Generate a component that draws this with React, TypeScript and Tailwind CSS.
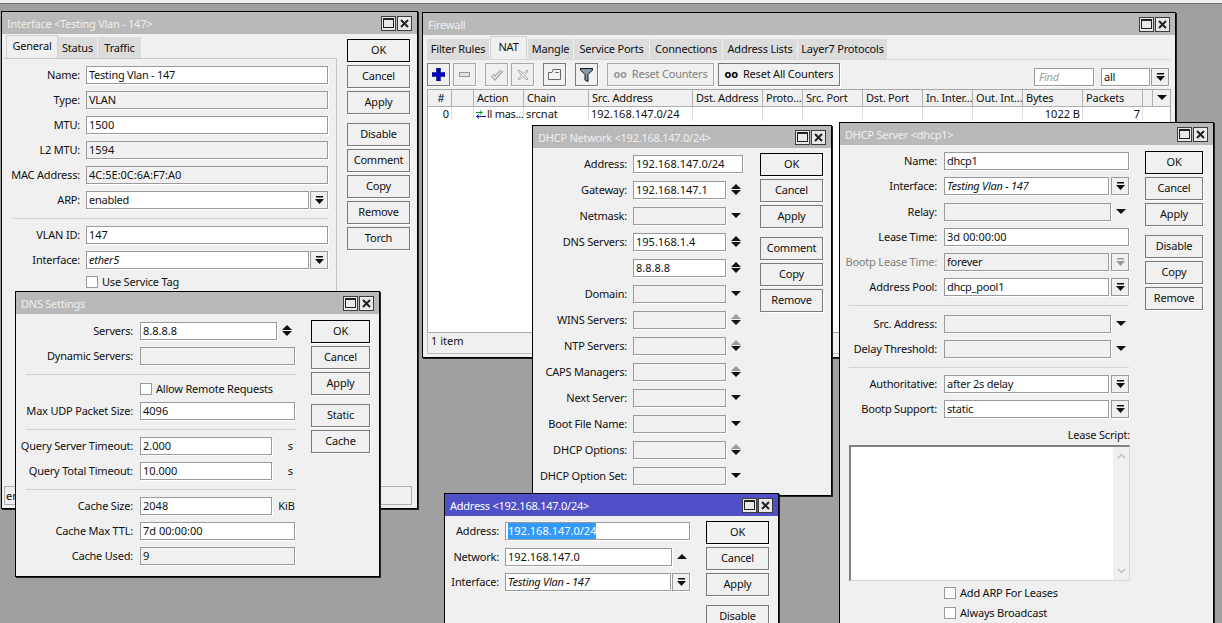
import type { ReactNode } from "react";
import { clsx } from "clsx";

const label = "text-right text-[11px] leading-[18px] tracking-[-0.2px] text-[#111] whitespace-nowrap";

function WinBtn({ close }: { close?: boolean }) {
  return (
    <div className="flex h-[15px] w-[15px] items-center justify-center border border-[#3c3c3c] bg-[#e8e8e8]">
      {close ? (
        <svg width="9" height="9" viewBox="0 0 9 9">
          <path d="M1 1L8 8M8 1L1 8" stroke="#222" strokeWidth="2" />
        </svg>
      ) : (
        <div className="h-[10px] w-[11px] border border-[#222] border-t-2" />
      )}
    </div>
  );
}

function Window({
  title,
  active,
  className,
  children,
}: {
  title: string;
  active?: boolean;
  className: string;
  children: ReactNode;
}) {
  return (
    <div className={clsx("absolute flex flex-col overflow-hidden border border-black bg-[#f0f0f0] shadow-[1px_1px_0_#222]", className)}>
      <div className={clsx("flex h-[22px] shrink-0 items-center justify-between pl-[5px] pr-[5px]", active ? "bg-[#4f50c8] text-white" : "bg-[#b9b9b9] text-[#efefef]")}>
        <span className="pt-[2px] text-[11px] tracking-[-0.25px] whitespace-nowrap">{title}</span>
        <div className="flex gap-[1px]">
          <WinBtn />
          <WinBtn close />
        </div>
      </div>
      {children}
    </div>
  );
}

function Btn({ children, primary, className }: { children: ReactNode; primary?: boolean; className?: string }) {
  return (
    <div
      className={clsx(
        "flex h-[23px] shrink-0 items-center justify-center bg-[#f0f0f0] text-[11px] tracking-[-0.2px] text-[#111] shadow-[1px_1px_0_#fff]",
        primary ? "border border-black" : "border border-[#7a7a7a]",
        className,
      )}
    >
      {children}
    </div>
  );
}

function Buttons({ groups, width }: { groups: string[][]; width: string }) {
  return (
    <div className={clsx("flex shrink-0 flex-col gap-[9px]", width)}>
      {groups.map((g, i) => (
        <div key={i} className="flex flex-col gap-[3px]">
          {g.map((b) => (
            <Btn key={b} primary={b === "OK"}>
              {b}
            </Btn>
          ))}
        </div>
      ))}
    </div>
  );
}

function Field({
  value,
  disabled,
  italic,
  className,
  selected,
}: {
  value?: string;
  disabled?: boolean;
  italic?: boolean;
  className?: string;
  selected?: boolean;
}) {
  const wordy = /[a-z]{3}/i.test(value ?? "");
  return (
    <div
      className={clsx(
        "flex h-[18px] items-center overflow-hidden border border-[#9a9a9a] pl-[2px] text-[11px] whitespace-nowrap text-[#111] shadow-[1px_1px_0_#fff]",
        disabled ? "bg-[#f0f0f0]" : "bg-white",
        italic && "italic",
        wordy && "tracking-[-0.25px]",
        className,
      )}
    >
      {selected ? <span className="bg-[#3399ff] text-white">{value}</span> : value}
    </div>
  );
}

function DropBtn({ faded }: { faded?: boolean }) {
  const c = faded ? "#9a9a9a" : "#111";
  return (
    <div className="flex h-[18px] w-[18px] shrink-0 items-center justify-center border border-[#9a9a9a] bg-[#f0f0f0] shadow-[1px_1px_0_#fff]">
      <svg width="9" height="9" viewBox="0 0 9 9">
        <path d="M1 0H8V1.5H1Z M0 3H9L4.5 8Z" fill={c} />
      </svg>
    </div>
  );
}

function Arrow({ kind }: { kind: "down" | "up" | "both" | "bothFaded" }) {
  if (kind === "down") {
    return (
      <svg width="10" height="5" viewBox="0 0 10 5" className="mb-[1px] shrink-0">
        <path d="M0 0H10L5 5Z" fill="#111" />
      </svg>
    );
  }
  if (kind === "up") {
    return (
      <svg width="10" height="5" viewBox="0 0 10 5" className="mb-[1px] shrink-0">
        <path d="M0 5H10L5 0Z" fill="#111" />
      </svg>
    );
  }
  return (
    <svg width="10" height="11" viewBox="0 0 10 11" className="mb-[1px] shrink-0">
      <path d="M0 5H10L5 0Z" fill={kind === "bothFaded" ? "#9a9a9a" : "#111"} />
      <path d="M0 6H10L5 11Z" fill="#111" />
    </svg>
  );
}

function Row({
  name,
  labelWidth,
  gap,
  rowClass,
  muted,
  children,
}: {
  name?: string;
  labelWidth: string;
  gap: string;
  rowClass: string;
  muted?: boolean;
  children?: ReactNode;
}) {
  return (
    <div className={clsx("flex items-start", gap, rowClass)}>
      <div className={clsx(label, labelWidth, muted && "!text-[#808080]")}>{name}</div>
      {children}
    </div>
  );
}

function Check({ text, className }: { text: string; className?: string }) {
  return (
    <div className={clsx("flex items-center gap-[4px] text-[11px] leading-[14px] tracking-[-0.2px] whitespace-nowrap text-[#111]", className)}>
      <div className="h-[12px] w-[12px] border border-[#9a9a9a] bg-white" />
      {text}
    </div>
  );
}

function Sep({ className }: { className?: string }) {
  return <div className={clsx("h-px bg-[#d4d4d4]", className)} />;
}

function InterfaceWindow() {
  const lw = "w-[76px]";
  const gap = "gap-[6px]";
  const rows: [string, string, boolean][] = [
    ["Name:", "Testing Vlan - 147", false],
    ["Type:", "VLAN", true],
    ["MTU:", "1500", false],
    ["L2 MTU:", "1594", true],
    ["MAC Address:", "4C:5E:0C:6A:F7:A0", true],
  ];
  return (
    <Window title="Interface <Testing Vlan - 147>" className="left-[1px] top-[11px] h-[498px] w-[417px]">
      <div className="flex min-h-0 flex-1 flex-col pl-[2px] pr-[5px] pb-[3px]">
        <div className="flex flex-1">
          <div className="w-[333px] shrink-0">
            <div className="flex h-[24px] items-end pl-[2px] text-[11px] tracking-[-0.2px] text-[#111]">
              <div className="flex h-[23px] w-[52px] items-center justify-center border border-b-0 border-[#d0d0d0] bg-[#f0f0f0] pb-[2px]">General</div>
              <div className="flex h-[21px] w-[40px] items-center justify-center border-r border-[#f0f0f0] bg-[#dcdcdc] pt-[1px]">Status</div>
              <div className="flex h-[21px] w-[43px] items-center justify-center bg-[#dcdcdc] pt-[1px]">Traffic</div>
            </div>
            <div className="h-[425px] border-t border-r border-[#c8c8c8] pt-[7px]">
              {rows.map(([n, v, d]) => (
                <Row key={n} name={n} labelWidth={lw} gap={gap} rowClass="h-[25px]">
                  <Field value={v} disabled={d} className="w-[242px]" />
                </Row>
              ))}
              <Row name="ARP:" labelWidth={lw} gap={gap} rowClass="h-[25px]">
                <div className="flex w-[242px] gap-px">
                  <Field value="enabled" className="flex-1" />
                  <DropBtn />
                </div>
              </Row>
              <Sep className="mt-[2px] ml-[9px] w-[315px]" />
              <Row name="VLAN ID:" labelWidth={lw} gap={gap} rowClass="mt-[7px] h-[25px]">
                <Field value="147" className="w-[242px]" />
              </Row>
              <Row name="Interface:" labelWidth={lw} gap={gap} rowClass="h-[24px]">
                <div className="flex w-[242px] gap-px">
                  <Field value="ether5" italic className="flex-1" />
                  <DropBtn />
                </div>
              </Row>
              <Check text="Use Service Tag" className="ml-[82px]" />
            </div>
          </div>
          <div className="ml-[10px] pt-[5px]">
            <Buttons groups={[["OK", "Cancel", "Apply"], ["Disable", "Comment", "Copy", "Remove", "Torch"]]} width="w-[63px]" />
          </div>
        </div>
        <div className="h-[19px] shrink-0 border border-[#b0b0b0] pl-[1px] text-[11px] leading-[17px] text-[#111]">enabled</div>
      </div>
    </Window>
  );
}

function DnsWindow() {
  const lw = "w-[116px]";
  const gap = "gap-[7px]";
  const unit = "flex h-[18px] items-center text-[11px] text-[#111]";
  return (
    <Window title="DNS Settings" className="left-[15px] top-[291px] h-[286px] w-[365px]">
      <div className="flex flex-1 pl-[1px] pt-[8px]">
        <div className="w-[280px] shrink-0">
          <Row name="Servers:" labelWidth={lw} gap={gap} rowClass="h-[25px]">
            <div className="flex items-center gap-[5px]">
              <Field value="8.8.8.8" className="w-[137px]" />
              <Arrow kind="both" />
            </div>
          </Row>
          <Row name="Dynamic Servers:" labelWidth={lw} gap={gap} rowClass="h-[25px]">
            <Field disabled className="w-[155px]" />
          </Row>
          <Sep className="mt-[2px] ml-[9px] w-[270px]" />
          <Check text="Allow Remote Requests" className="mt-[7px] ml-[123px] h-[14px]" />
          <Row name="Max UDP Packet Size:" labelWidth={lw} gap={gap} rowClass="mt-[6px] h-[25px]">
            <Field value="4096" className="w-[155px]" />
          </Row>
          <Sep className="mt-[2px] ml-[9px] w-[270px]" />
          <Row name="Query Server Timeout:" labelWidth={lw} gap={gap} rowClass="mt-[7px] h-[25px]">
            <div className="flex w-[155px] justify-between">
              <Field value="2.000" className="w-[132px]" />
              <span className={clsx(unit, "pr-[2px]")}>s</span>
            </div>
          </Row>
          <Row name="Query Total Timeout:" labelWidth={lw} gap={gap} rowClass="h-[25px]">
            <div className="flex w-[155px] justify-between">
              <Field value="10.000" className="w-[132px]" />
              <span className={clsx(unit, "pr-[2px]")}>s</span>
            </div>
          </Row>
          <Sep className="mt-[2px] ml-[9px] w-[270px]" />
          <Row name="Cache Size:" labelWidth={lw} gap={gap} rowClass="mt-[7px] h-[25px]">
            <div className="flex w-[155px] justify-between">
              <Field value="2048" className="w-[132px]" />
              <span className={unit}>KiB</span>
            </div>
          </Row>
          <Row name="Cache Max TTL:" labelWidth={lw} gap={gap} rowClass="h-[25px]">
            <Field value="7d 00:00:00" className="w-[155px]" />
          </Row>
          <Row name="Cache Used:" labelWidth={lw} gap={gap} rowClass="h-[25px]">
            <Field value="9" disabled className="w-[155px]" />
          </Row>
        </div>
        <div className="-mt-[2px] ml-[14px]">
          <Buttons groups={[["OK", "Cancel", "Apply"], ["Static", "Cache"]]} width="w-[59px]" />
        </div>
      </div>
    </Window>
  );
}

function ToolBtn({ children, className, faded }: { children: ReactNode; className: string; faded?: boolean }) {
  return (
    <div className={clsx("flex h-[23px] shrink-0 items-center justify-center border text-[11px] tracking-[-0.2px] shadow-[1px_1px_0_#fff]", faded ? "border-[#aaa] text-[#808080]" : "border-[#7a7a7a] text-[#111]", className)}>
      {children}
    </div>
  );
}

const columns: [string, string][] = [
  ["#", "w-[24px] justify-center"],
  ["", "w-[22px]"],
  ["Action", "w-[50px]"],
  ["Chain", "w-[65px]"],
  ["Src. Address", "w-[104px]"],
  ["Dst. Address", "w-[70px]"],
  ["Proto...", "w-[40px]"],
  ["Src. Port", "w-[60px]"],
  ["Dst. Port", "w-[60px]"],
  ["In. Inter...", "w-[50px]"],
  ["Out. Int...", "w-[50px]"],
  ["Bytes", "w-[60px]"],
  ["Packets", "w-[60px]"],
  ["", "w-[10px]"],
];

const tabs: [string, string][] = [
  ["Filter Rules", "w-[62px]"],
  ["NAT", "w-[37px]"],
  ["Mangle", "w-[45px]"],
  ["Service Ports", "w-[75px]"],
  ["Connections", "w-[72px]"],
  ["Address Lists", "w-[74px]"],
  ["Layer7 Protocols", "w-[89px]"],
];

function FirewallWindow() {
  const cell = "flex h-[14px] items-center overflow-hidden border-r border-[#e0e0e0] bg-white px-[2px] text-[11px] whitespace-nowrap text-[#111]";
  return (
    <Window title="Firewall" className="left-[422px] top-[12px] h-[346px] w-[754px]">
      <div className="flex min-h-0 flex-1 flex-col px-[4px]">
        <div className="mt-[1px] flex h-[24px] shrink-0 items-end gap-px border-b border-[#d8d8d8] text-[11px] tracking-[-0.2px] whitespace-nowrap text-[#111]">
          {tabs.map(([t, w]) =>
            t === "NAT" ? (
              <div key={t} className={clsx("flex h-[23px] shrink-0 items-center justify-center border border-b-0 border-[#d0d0d0] bg-[#f0f0f0] pb-[2px]", w)}>
                {t}
              </div>
            ) : (
              <div key={t} className={clsx("flex h-[20px] shrink-0 items-center justify-center bg-[#dcdcdc] pt-[1px]", w)}>
                {t}
              </div>
            ),
          )}
        </div>
        <div className="mt-[3px] flex h-[23px] shrink-0 items-center">
          <ToolBtn className="w-[23px]">
            <svg width="13" height="13" viewBox="0 0 13 13">
              <path d="M4.5 0H8.5V4.5H13V8.5H8.5V13H4.5V8.5H0V4.5H4.5Z" fill="#0000c8" stroke="#000050" strokeWidth="0.5" />
            </svg>
          </ToolBtn>
          <ToolBtn faded className="ml-[3px] w-[23px]">
            <div className="h-[5px] w-[11px] border border-[#999] bg-[#e4e4e4]" />
          </ToolBtn>
          <ToolBtn faded className="ml-[9px] w-[23px]">
            <svg width="14" height="12" viewBox="0 0 14 12">
              <path d="M1 7L5 11L13 2M3 5L5 7L11 1" fill="none" stroke="#a8a8a8" strokeWidth="1.3" />
            </svg>
          </ToolBtn>
          <ToolBtn faded className="ml-[3px] w-[23px]">
            <svg width="12" height="12" viewBox="0 0 12 12">
              <path d="M2 1L6 4.5L10 1L11 2L7.5 6L11 10L10 11L6 7.5L2 11L1 10L4.5 6L1 2Z" fill="#f0f0f0" stroke="#a8a8a8" />
            </svg>
          </ToolBtn>
          <ToolBtn className="ml-[9px] w-[23px]">
            <svg width="13" height="11" viewBox="0 0 13 11">
              <path d="M0.5 3.5H4L5 0.5H12.5V10.5H0.5Z" fill="#f4f4f4" stroke="#666" />
              <path d="M7 3.5H11" stroke="#777" />
            </svg>
          </ToolBtn>
          <ToolBtn className="ml-[9px] w-[23px]">
            <svg width="13" height="14" viewBox="0 0 13 14">
              <path d="M0.5 0.5H12.5V2L8 6.5V13.5L5 12V6.5L0.5 2Z" fill="#8a9aa6" stroke="#111" />
            </svg>
          </ToolBtn>
          <ToolBtn faded className="ml-[9px] w-[107px] gap-[5px]">
            <span className="font-bold text-[#999]">oo</span> Reset Counters
          </ToolBtn>
          <ToolBtn className="ml-[4px] w-[122px] gap-[5px]">
            <span className="font-bold text-black">oo</span> Reset All Counters
          </ToolBtn>
          <div className="ml-auto flex items-center gap-[7px] pr-[2px] pt-[5px]">
            <Field value="Find" italic className="w-[60px] pl-[4px] !text-[#a0a0a0]" />
            <div className="flex gap-px">
              <Field value="all" className="w-[49px]" />
              <DropBtn />
            </div>
          </div>
        </div>
        <div className="mt-[3px] flex min-h-0 flex-1 flex-col border border-[#a8a8a8] bg-white">
          <div className="flex h-[17px] shrink-0 bg-[#f0f0f0] text-[11px] tracking-[-0.2px] text-[#111]">
            {columns.map(([c, w], i) => (
              <div key={i} className={clsx("flex shrink-0 items-center overflow-hidden border-r border-b border-[#b0b0b0] pl-[3px] pt-[1px] whitespace-nowrap", w)}>
                {c}
              </div>
            ))}
            <div className="flex flex-1 items-center justify-center border-b border-[#b0b0b0]">
              <Arrow kind="down" />
            </div>
          </div>
          <div className="flex">
            <div className={clsx(cell, "w-[24px] justify-end")}>0</div>
            <div className={clsx(cell, "w-[22px]")} />
            <div className={clsx(cell, "w-[50px] gap-[1px]")}>
              <svg width="10" height="9" viewBox="0 0 10 9" className="shrink-0">
                <path d="M0 2.5H6M4 0.5L6.5 2.5L4 4.5" fill="none" stroke="#0a9a30" />
                <path d="M10 6.5H1M3 4.5L0.5 6.5L3 8.5" fill="none" stroke="#1010c0" />
              </svg>
              <span className="tracking-tight">ll mas...</span>
            </div>
            <div className={clsx(cell, "w-[65px]")}>srcnat</div>
            <div className={clsx(cell, "w-[104px]")}>192.168.147.0/24</div>
            <div className={clsx(cell, "w-[70px]")} />
            <div className={clsx(cell, "w-[40px]")} />
            <div className={clsx(cell, "w-[60px]")} />
            <div className={clsx(cell, "w-[60px]")} />
            <div className={clsx(cell, "w-[50px]")} />
            <div className={clsx(cell, "w-[50px]")} />
            <div className={clsx(cell, "w-[60px] justify-end")}>1022 B</div>
            <div className={clsx(cell, "w-[60px] justify-end")}>7</div>
          </div>
        </div>
        <div className="mt-[1px] mb-[3px] h-[20px] shrink-0 border-b border-l border-[#c0c0c0] pl-[3px] text-[11px] leading-[14px] text-[#111]">1 item</div>
      </div>
    </Window>
  );
}

function DhcpNetworkWindow() {
  const lw = "w-[94px]";
  const gap = "gap-[6px]";
  const rows: [string, string, "down" | "both" | "bothFaded"][] = [
    ["Gateway:", "192.168.147.1", "both"],
    ["Netmask:", "", "down"],
    ["DNS Servers:", "195.168.1.4", "both"],
    ["", "8.8.8.8", "both"],
    ["Domain:", "", "down"],
    ["WINS Servers:", "", "bothFaded"],
    ["NTP Servers:", "", "bothFaded"],
    ["CAPS Managers:", "", "bothFaded"],
    ["Next Server:", "", "down"],
    ["Boot File Name:", "", "down"],
    ["DHCP Options:", "", "bothFaded"],
    ["DHCP Option Set:", "", "down"],
  ];
  return (
    <Window title="DHCP Network <192.168.147.0/24>" className="left-[532px] top-[125px] h-[371px] w-[300px]">
      <div className="flex flex-1 pt-[7px]">
        <div className="w-[211px] shrink-0">
          <Row name="Address:" labelWidth={lw} gap={gap} rowClass="h-[26px]">
            <Field value="192.168.147.0/24" className="w-[110px]" />
          </Row>
          {rows.map(([n, v, k], i) => (
            <Row key={i} name={n} labelWidth={lw} gap={gap} rowClass="h-[26px]">
              <div className="flex h-[18px] items-center gap-[5px]">
                <Field value={v} disabled={!v} className="w-[93px]" />
                <Arrow kind={k} />
              </div>
            </Row>
          ))}
        </div>
        <div className="-mt-[2px] ml-[16px]">
          <Buttons groups={[["OK", "Cancel", "Apply"], ["Comment", "Copy", "Remove"]]} width="w-[63px]" />
        </div>
      </div>
    </Window>
  );
}

function DhcpServerWindow() {
  const lw = "w-[97px]";
  const gap = "gap-[7px]";
  const w = "w-[185px]";
  const drop = (v: string, i?: boolean, d?: boolean) => (
    <div className={clsx("flex gap-[2px]", w)}>
      <Field value={v} italic={i} disabled={d} className="flex-1" />
      <DropBtn faded={d} />
    </div>
  );
  const arrow = (
    <div className="flex h-[18px] items-center gap-[5px]">
      <Field disabled className="w-[167px]" />
      <Arrow kind="down" />
    </div>
  );
  return (
    <Window title="DHCP Server <dhcp1>" className="left-[839px] top-[122px] h-[520px] w-[375px]">
      <div className="flex flex-1 pt-[7px]">
        <div className="w-[290px] shrink-0">
          <Row name="Name:" labelWidth={lw} gap={gap} rowClass="h-[25px]">
            <Field value="dhcp1" className={w} />
          </Row>
          <Row name="Interface:" labelWidth={lw} gap={gap} rowClass="h-[26px]">
            {drop("Testing Vlan - 147", true)}
          </Row>
          <Row name="Relay:" labelWidth={lw} gap={gap} rowClass="h-[25px]">
            {arrow}
          </Row>
          <Row name="Lease Time:" labelWidth={lw} gap={gap} rowClass="h-[25px]">
            <Field value="3d 00:00:00" className={w} />
          </Row>
          <Row name="Bootp Lease Time:" muted labelWidth={lw} gap={gap} rowClass="h-[25px]">
            {drop("forever", false, true)}
          </Row>
          <Row name="Address Pool:" labelWidth={lw} gap={gap} rowClass="h-[25px]">
            {drop("dhcp_pool1")}
          </Row>
          <Sep className="mt-[2px] ml-[9px] w-[280px]" />
          <Row name="Src. Address:" labelWidth={lw} gap={gap} rowClass="mt-[9px] h-[25px]">
            {arrow}
          </Row>
          <Row name="Delay Threshold:" labelWidth={lw} gap={gap} rowClass="h-[27px]">
            {arrow}
          </Row>
          <Sep className="ml-[9px] w-[280px]" />
          <Row name="Authoritative:" labelWidth={lw} gap={gap} rowClass="mt-[7px] h-[25px]">
            {drop("after 2s delay")}
          </Row>
          <Row name="Bootp Support:" labelWidth={lw} gap={gap} rowClass="h-[25px]">
            {drop("static")}
          </Row>
          <div className="mt-[1px] ml-[9px] w-[281px] text-right text-[11px] leading-[18px] tracking-[-0.2px] text-[#111]">Lease Script:</div>
          <div className="mt-[1px] ml-[9px] flex h-[136px] w-[281px] border border-t-2 border-l-2 border-[#808080] border-r-[#d8d8d8] border-b-[#d8d8d8] bg-white">
            <div className="flex-1" />
            <div className="flex w-[16px] flex-col items-center justify-between bg-[#f0f0f0] py-[6px]">
              <svg width="9" height="6" viewBox="0 0 9 6">
                <path d="M1 5L4.5 1.5L8 5" fill="none" stroke="#c0c0c0" strokeWidth="1.5" />
              </svg>
              <svg width="9" height="6" viewBox="0 0 9 6">
                <path d="M1 1L4.5 4.5L8 1" fill="none" stroke="#c0c0c0" strokeWidth="1.5" />
              </svg>
            </div>
          </div>
          <Check text="Add ARP For Leases" className="mt-[5px] ml-[104px]" />
          <Check text="Always Broadcast" className="mt-[6px] ml-[104px]" />
        </div>
        <div className="-mt-[1px] ml-[15px]">
          <Buttons groups={[["OK", "Cancel", "Apply"], ["Disable", "Copy", "Remove"]]} width="w-[58px]" />
        </div>
      </div>
    </Window>
  );
}

function AddressWindow() {
  const lw = "w-[54px]";
  const gap = "gap-[6px]";
  return (
    <Window title="Address <192.168.147.0/24>" active className="left-[444px] top-[493px] h-[160px] w-[335px]">
      <div className="flex flex-1 pt-[6px]">
        <div className="w-[245px] shrink-0">
          <Row name="Address:" labelWidth={lw} gap={gap} rowClass="h-[26px]">
            <Field value="192.168.147.0/24" selected className="w-[185px]" />
          </Row>
          <Row name="Network:" labelWidth={lw} gap={gap} rowClass="h-[25px]">
            <div className="flex h-[18px] items-center gap-[5px]">
              <Field value="192.168.147.0" className="w-[167px]" />
              <Arrow kind="up" />
            </div>
          </Row>
          <Row name="Interface:" labelWidth={lw} gap={gap} rowClass="h-[25px]">
            <div className="flex w-[185px] gap-[1px]">
              <Field value="Testing Vlan - 147" italic className="flex-1" />
              <DropBtn />
            </div>
          </Row>
        </div>
        <div className="-mt-[1px] ml-[16px]">
          <Buttons groups={[["OK", "Cancel", "Apply"], ["Disable"]]} width="w-[63px]" />
        </div>
      </div>
    </Window>
  );
}

export default function App() {
  return (
    <div className="relative h-[623px] w-[1222px] overflow-hidden bg-[#a0a0a0] font-['Noto_Sans',sans-serif]">
      <div className="h-[4px] border-b border-[#6e6e6e] bg-[#f0f0f0]" />
      <InterfaceWindow />
      <DnsWindow />
      <FirewallWindow />
      <DhcpNetworkWindow />
      <DhcpServerWindow />
      <AddressWindow />
    </div>
  );
}
